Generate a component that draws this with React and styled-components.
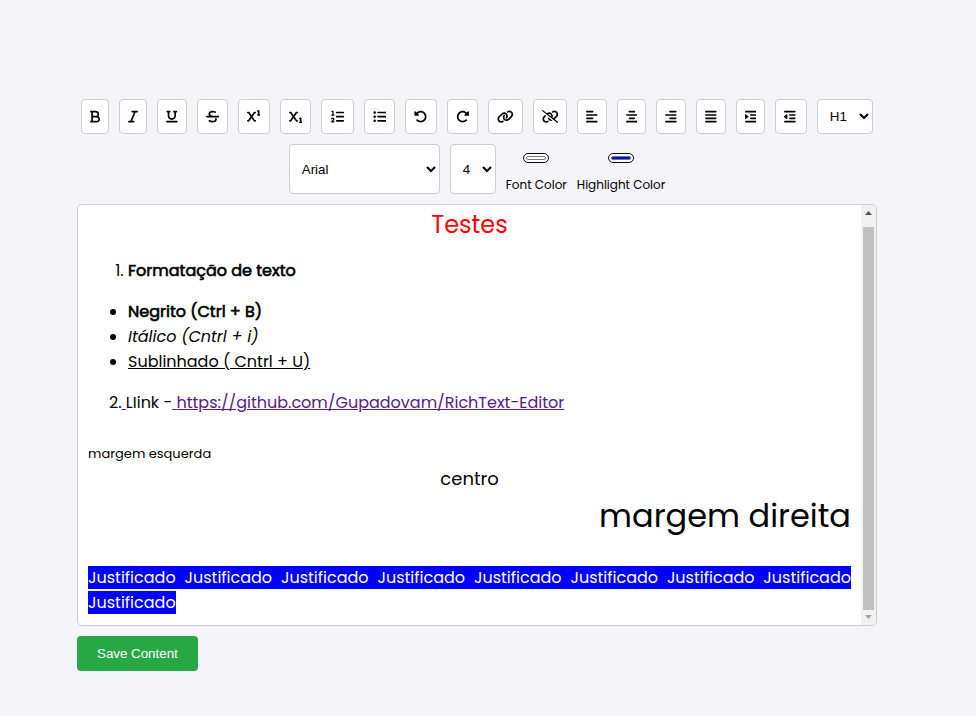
import React from "react";
import styled, { createGlobalStyle, css } from "styled-components";
import {
  FaBold, FaItalic, FaUnderline, FaStrikethrough, FaSuperscript, FaSubscript,
  FaListUl, FaRotateLeft, FaRotateRight, FaLink, FaLinkSlash,
  FaAlignLeft, FaAlignCenter, FaAlignRight, FaAlignJustify, FaIndent, FaOutdent,
} from "react-icons/fa6";

const GlobalStyle = createGlobalStyle`
  *, *::before, *::after { box-sizing: border-box; }
  body {
    margin: 0;
    background: #f4f4f9;
    color: #000;
    font-family: Poppins, Inter, sans-serif;
    font-size: 16px;
  }
`;

const Page = styled.main`
  padding: 99px 22px 44px 0;
`;

const Container = styled.div`
  width: 100%;
  max-width: 800px;
  margin: 0 auto;
  display: flex;
  flex-direction: column;
  align-items: stretch;
  gap: 10px;
`;

const Toolbar = styled.div`
  display: flex;
  flex-wrap: wrap;
  justify-content: center;
  gap: 10px;
`;

const control = css`
  border: 1px solid #ccc;
  border-radius: 4px;
  background: #fff;
  color: #000;
  cursor: pointer;
`;

const ToolButton = styled.button`
  ${control}
  display: flex;
  align-items: center;
  justify-content: center;
  height: 35px;
  padding: 0 8px;

  svg {
    display: block;
    width: ${(p) => p.$units / 512}em;
    height: 1em;
  }
`;

const Select = styled.select`
  ${control}
  width: ${(p) => p.$width}px;
  height: ${(p) => p.$height}px;
  padding: 0 0 0 8px;
  font-family: "Liberation Sans", Arial, sans-serif;
`;

const ColorField = styled.label`
  display: flex;
  flex-direction: column;
  align-items: center;
  justify-content: space-between;
  height: 50px;
  padding-top: 9px;
  font-size: 12px;
  line-height: 19px;
`;

const ColorInput = styled.input`
  appearance: none;
  width: 26px;
  height: 10px;
  padding: 2px;
  border: 1px solid #020a2c;
  border-radius: 5px;
  background: #fff;
  cursor: pointer;

  &::-webkit-color-swatch-wrapper { padding: 0; }
  &::-webkit-color-swatch {
    border: 1px solid #777;
    border-radius: 2px;
  }
`;

const EditorFrame = styled.section`
  display: flex;
  border: 1px solid #ccc;
  border-radius: 5px;
  background: #fff;
  overflow: hidden;
`;

const Editor = styled.div`
  flex: 1;
  min-width: 0;
  min-height: 420px;
  padding: 2px 10px 10px;
  outline: none;

  b {
    font-weight: 400;
    -webkit-text-stroke: 0.04em currentColor;
  }
`;

const Line = styled.div`
  min-height: 25px;
  text-align: ${(p) => p.$align || "left"};
`;

const Sized = styled.span`
  font-size: ${(p) => p.$size}px;
  color: ${(p) => p.$color || "inherit"};
`;

const NumberedList = styled.ol`
  margin: 16px 0;
  padding-left: 40px;
`;

const BulletList = styled.ul`
  margin: 16px 0;
  padding-left: 40px;
`;

const Paragraph = styled.p`
  margin: 16px 0 0;
  padding-left: 21px;
`;

const Anchor = styled.a`
  color: #551a8b;
  text-decoration: underline;
`;

const Highlight = styled.span`
  background: #00f;
  color: #fff;
`;

const Scrollbar = styled.div`
  display: flex;
  flex-direction: column;
  align-items: center;
  width: 15px;
  background: #f1f1f1;
`;

const ScrollArrow = styled.svg`
  width: 9px;
  height: ${(p) => p.$height}px;
  fill: ${(p) => p.$color};
`;

const ScrollThumb = styled.div`
  flex: 1;
  width: 11px;
  background: #c1c1c1;
`;

const SaveButton = styled.button`
  align-self: flex-start;
  height: 35px;
  padding: 0 20px;
  border: 0;
  border-radius: 4px;
  background: #28a745;
  color: #fff;
  font-family: "Liberation Sans", Arial, sans-serif;
  cursor: pointer;
`;

const ListOlIcon = () => (
  <svg viewBox="0 0 576 512" fill="currentColor">
    <path d="M55.1 56.04C55.1 42.78 66.74 32.04 79.1 32.04H111.1C125.3 32.04 135.1 42.78 135.1 56.04V176H151.1C165.3 176 175.1 186.8 175.1 200C175.1 213.3 165.3 224 151.1 224H71.1C58.74 224 47.1 213.3 47.1 200C47.1 186.8 58.74 176 71.1 176H87.1V80.04H79.1C66.74 80.04 55.1 69.29 55.1 56.04ZM118.7 341.2C112.1 333.8 100.4 334.3 94.65 342.4L83.53 357.9C75.83 368.7 60.84 371.2 50.05 363.5C39.26 355.8 36.77 340.8 44.47 330.1L55.59 314.5C79.33 281.2 127.9 278.8 154.8 309.6C176.1 333.1 175.6 370.5 153.7 394.3L118.8 432H152C165.3 432 176 442.7 176 456C176 469.3 165.3 480 152 480H64C54.47 480 45.84 474.4 42.02 465.6C38.19 456.9 39.9 446.7 46.36 439.7L118.4 361.7C123.7 355.9 123.8 347.1 118.7 341.2Z" />
    <path d="M512 64a32 32 0 0 1 0 64H256a32 32 0 0 1 0-64ZM512 224a32 32 0 0 1 0 64H256a32 32 0 0 1 0-64ZM512 384a32 32 0 0 1 0 64H256a32 32 0 0 1 0-64Z" />
  </svg>
);

const tools = [
  { label: "Bold", Icon: FaBold, units: 384 },
  { label: "Italic", Icon: FaItalic, units: 384 },
  { label: "Underline", Icon: FaUnderline, units: 448 },
  { label: "Strikethrough", Icon: FaStrikethrough, units: 512 },
  { label: "Superscript", Icon: FaSuperscript, units: 512 },
  { label: "Subscript", Icon: FaSubscript, units: 512 },
  { label: "Numbered list", Icon: ListOlIcon, units: 576 },
  { label: "Bulleted list", Icon: FaListUl, units: 512 },
  { label: "Undo", Icon: FaRotateLeft, units: 512 },
  { label: "Redo", Icon: FaRotateRight, units: 512 },
  { label: "Insert link", Icon: FaLink, units: 640 },
  { label: "Remove link", Icon: FaLinkSlash, units: 640 },
  { label: "Align left", Icon: FaAlignLeft, units: 448 },
  { label: "Align center", Icon: FaAlignCenter, units: 448 },
  { label: "Align right", Icon: FaAlignRight, units: 448 },
  { label: "Justify", Icon: FaAlignJustify, units: 448 },
  { label: "Indent", Icon: FaIndent, units: 448 },
  { label: "Outdent", Icon: FaOutdent, units: 512, viewBox: "0 0 512 512" },
];

const headings = ["H1", "H2", "H3", "H4", "H5", "H6"];
const fonts = ["Arial", "Verdana", "Times New Roman", "Garamond", "Georgia", "Courier New"];
const sizes = ["1", "2", "3", "4", "5", "6", "7"];
const justified = Array(9).fill("Justificado").join(" ");

const Options = ({ items }) => items.map((item) => <option key={item}>{item}</option>);

export default function App() {
  return (
    <>
      <GlobalStyle />
      <Page>
        <Container>
          <Toolbar role="toolbar" aria-label="Formatting">
            {tools.map(({ label, Icon, units, viewBox }) => (
              <ToolButton key={label} type="button" aria-label={label} $units={units}>
                <Icon {...(viewBox ? { viewBox } : {})} />
              </ToolButton>
            ))}
            <Select aria-label="Heading" $width={56} $height={35} defaultValue="H1">
              <Options items={headings} />
            </Select>
            <Select aria-label="Font" $width={151} $height={50} defaultValue="Arial">
              <Options items={fonts} />
            </Select>
            <Select aria-label="Font size" $width={46} $height={50} defaultValue="4">
              <Options items={sizes} />
            </Select>
            <ColorField>
              <ColorInput type="color" defaultValue="#ffffff" />
              Font Color
            </ColorField>
            <ColorField>
              <ColorInput type="color" defaultValue="#0000ff" />
              Highlight Color
            </ColorField>
          </Toolbar>

          <EditorFrame>
            <Editor contentEditable suppressContentEditableWarning spellCheck={false}>
              <Line $align="center"><Sized $size={24} $color="#f00">Testes</Sized></Line>
              <NumberedList>
                <li><b>Formatação de texto</b></li>
              </NumberedList>
              <BulletList>
                <li><b>Negrito (Ctrl + B)</b></li>
                <li><i>Itálico (Cntrl + i)</i></li>
                <li><u>Sublinhado ( Cntrl + U)</u></li>
              </BulletList>
              <Paragraph>
                2.<Anchor href="https://github.com/Gupadovam/RichText-Editor"> </Anchor>
                LIink -
                <Anchor href="https://github.com/Gupadovam/RichText-Editor">
                  {" "}https://github.com/Gupadovam/RichText-Editor
                </Anchor>
              </Paragraph>
              <Line />
              <Line><Sized $size={13}>margem esquerda</Sized></Line>
              <Line $align="center"><Sized $size={18}>centro</Sized></Line>
              <Line $align="right"><Sized $size={32}>margem direita</Sized></Line>
              <Line />
              <Line $align="justify"><Highlight>{justified}</Highlight></Line>
            </Editor>
            <Scrollbar aria-hidden="true">
              <ScrollArrow $height={22} $color="#505050" viewBox="0 0 9 22">
                <path d="M1 10 L4.5 6 L8 10 Z" />
              </ScrollArrow>
              <ScrollThumb />
              <ScrollArrow $height={15} $color="#a3a3a3" viewBox="0 0 9 15">
                <path d="M1 5 H8 L4.5 9 Z" />
              </ScrollArrow>
            </Scrollbar>
          </EditorFrame>

          <SaveButton type="button">Save Content</SaveButton>
        </Container>
      </Page>
    </>
  );
}
